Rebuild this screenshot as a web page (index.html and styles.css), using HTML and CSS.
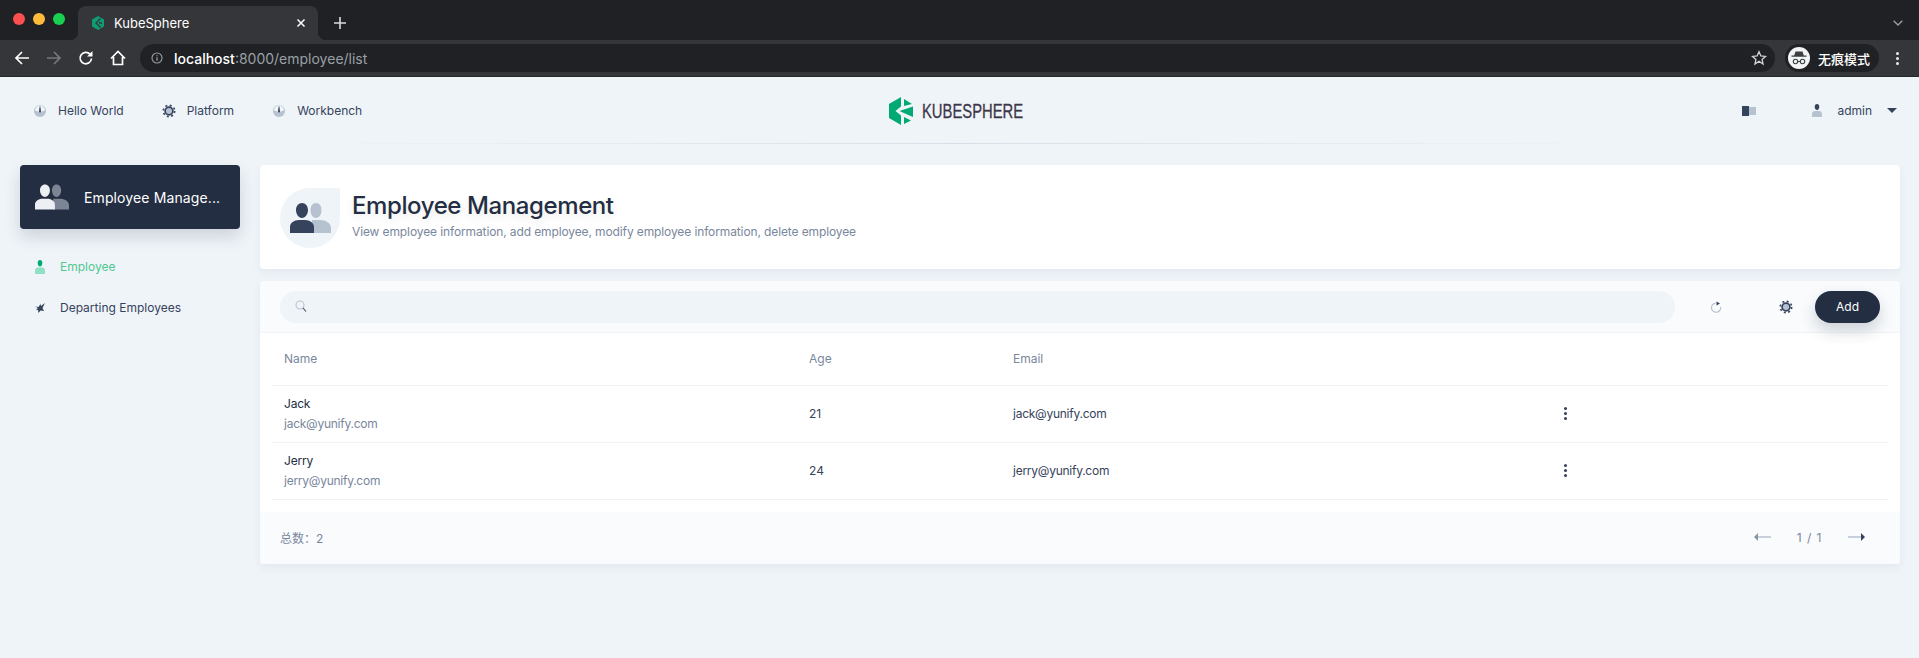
FILE: index.html
```html
<!DOCTYPE html>
<html lang="en">
<head>
<meta charset="utf-8">
<title>KubeSphere</title>
<link rel="stylesheet" href="styles.css">
</head>
<body>
<svg class="defs" width="0" height="0" aria-hidden="true">
  <symbol id="dial" viewBox="0 0 16 16">
    <circle cx="8" cy="8" r="6" fill="#b6c2cf"/>
    <path d="M3 7.500A5 5 0 0 1 13 7.500L8 9z" fill="#f2f5f8"/>
    <path d="M7.600 3.500h.8L9 8.500a1 1 0 1 1-2 0z" fill="#36435c"/>
  </symbol>
  <symbol id="gear" viewBox="0 0 16 16">
    <circle cx="8" cy="8" r="3.900" fill="#b6c2cf" stroke="#36435c" stroke-width="1.700"/>
    <circle cx="8" cy="8" r="5.700" fill="none" stroke="#36435c" stroke-width="1.600" stroke-dasharray="2 2.480"/>
  </symbol>
  <symbol id="group" viewBox="0 0 41 30">
    <path class="back" d="M26 0c3.500 0 5.500 3 5.500 7s-2 8-5.500 8-5.500-4-5.500-8 2-7 5.500-7zM22 17h8c6 0 11 3 11 8v5H22z"/>
    <path class="front" d="M12 0c3.500 0 6 3 6 7s-2.500 8-6 8-6-4-6-8 2.500-7 6-7zM0 30v-6c0-4 4-7 9-7h6c5 0 9 3 9 7v6z"/>
  </symbol>
</svg>

<header class="browser">
  <div class="tabstrip">
    <div class="lights">
      <span class="light red"></span><span class="light amber"></span><span class="light green"></span>
    </div>
    <div class="tab">
      <svg class="favicon" viewBox="0 0 14 14"><path d="M7 0l6 3.500v7L7 14l-6-3.500v-7z" fill="#0f9b73"/><path d="M9.500 2.500L5 7l4.500 4.500M8 7h3" stroke="#35363a" stroke-width="1.300" fill="none"/></svg>
      <span class="tab-title">KubeSphere</span>
      <svg class="tab-close" viewBox="0 0 10 10"><path d="M1.500 1.500l7 7M8.500 1.500l-7 7" stroke="#fff" stroke-width="1.500"/></svg>
    </div>
    <svg class="new-tab" viewBox="0 0 12 12"><path d="M6 0v12M0 6h12" stroke="#dadce0" stroke-width="1.600"/></svg>
    <svg class="tab-menu" viewBox="0 0 10 6"><path d="M.7.7L5 5l4.300-4.300" stroke="#9aa0a6" stroke-width="1.300" fill="none"/></svg>
  </div>
  <div class="toolbar">
    <svg class="tool" viewBox="0 0 16 16"><path d="M15 8H2M8 2L2 8l6 6" stroke="#fff" stroke-width="1.700" fill="none"/></svg>
    <svg class="tool" viewBox="0 0 16 16"><path d="M1 8h13M8 2l6 6-6 6" stroke="#75777b" stroke-width="1.700" fill="none"/></svg>
    <svg class="tool" viewBox="0 0 16 16"><path d="M13.500 8.500A5.700 5.700 0 1 1 12 4.200" stroke="#fff" stroke-width="1.700" fill="none"/><path d="M14.500 1v5.500H9z" fill="#fff"/></svg>
    <svg class="tool" viewBox="0 0 16 16"><path d="M1 8.500L8 1.500l7 7M3.500 7v7.500h9V7" stroke="#fff" stroke-width="1.700" fill="none"/></svg>
    <div class="omnibox">
      <svg class="info" viewBox="0 0 12 12"><circle cx="6" cy="6" r="5" stroke="#9aa0a6" stroke-width="1.100" fill="none"/><path d="M6 5.200v3.600M6 3.200v1.100" stroke="#9aa0a6" stroke-width="1.200"/></svg>
      <span class="url"><b>localhost</b>:8000/employee/list</span>
      <svg class="star" viewBox="0 0 16 16"><path d="M8 1.700l1.900 4.200 4.600.5-3.400 3.100.9 4.500L8 11.200l-4 2.800.9-4.500L1.500 6.400l4.600-.5z" stroke="#d2d4d7" stroke-width="1.300" fill="none"/></svg>
    </div>
    <div class="incognito">
      <svg class="spy" viewBox="0 0 22 22"><circle cx="11" cy="11" r="11" fill="#f1f3f4"/><path d="M7.500 4.500h7l1.300 4H18.500v1.300H3.500V8.500h2.700z" fill="#3c4043"/><circle cx="7.500" cy="14.500" r="2.200" fill="none" stroke="#3c4043" stroke-width="1.100"/><circle cx="14.500" cy="14.500" r="2.200" fill="none" stroke="#3c4043" stroke-width="1.100"/><path d="M9.700 14.500h2.600" stroke="#3c4043"/></svg>
      <span>无痕模式</span>
    </div>
    <div class="kebab"><i></i><i></i><i></i></div>
  </div>
</header>

<div class="page">
  <nav class="topnav">
    <div class="nav-left">
      <a class="nav-item"><svg class="icon16"><use href="#dial"/></svg>Hello World</a>
      <a class="nav-item"><svg class="icon16"><use href="#gear"/></svg>Platform</a>
      <a class="nav-item"><svg class="icon16"><use href="#dial"/></svg>Workbench</a>
    </div>
    <div class="logo">
      <svg class="logo-mark" viewBox="0 0 24 28"><path d="M12 0v9.500L6.500 14l5.500 4.500V28L0 21V7z" fill="#00aa72"/><path d="M15 2l8 5-8 2z" fill="#00aa72"/><path d="M10.500 14L24 9.500V20l-8-3.500z" fill="#00aa72"/><path d="M15 20l7 3.500-7 3.500z" fill="#00aa72"/></svg>
      <span class="logo-text">KUBESPHERE</span>
    </div>
    <div class="nav-right">
      <svg class="book" viewBox="0 0 14 10"><path d="M0 0h7v10H0z" fill="#36435c"/><path d="M7 1h7v8H7z" fill="#b6c2cf"/></svg>
      <svg class="user" viewBox="0 0 10 13"><path d="M5 0c1.500 0 2.300 1.200 2.300 2.800S6.500 6 5 6 2.700 4.400 2.700 2.800 3.500 0 5 0z" fill="#36435c"/><path d="M0 13v-3c0-2 1.500-3 3-3h4c1.500 0 3 1 3 3v3z" fill="#b6c2cf"/></svg>
      <span class="admin">admin</span>
      <span class="caret"></span>
    </div>
  </nav>

  <div class="layout">
    <aside class="sidebar">
      <div class="side-card">
        <svg class="side-group"><use href="#group"/></svg>
        <span class="side-title">Employee Manage...</span>
      </div>
      <ul class="side-menu">
        <li class="side-item active">
          <svg class="side-icon" viewBox="0 0 10 14"><path d="M5 0c1.500 0 2.300 1.200 2.300 3S6.500 6.500 5 6.500 2.700 4.800 2.700 3 3.500 0 5 0z" fill="#00aa72"/><path d="M0 14v-3.500C0 8.500 1.500 7.500 3 7.500h4c1.500 0 3 1 3 3V14z" fill="#90e0c5"/></svg>
          Employee
        </li>
        <li class="side-item">
          <svg class="side-icon" viewBox="0 0 10 10"><path d="M0 3.500l3.500 .5L5.500 1l.5 2L10 0 7.500 5 9 8 5.500 7.500 3.500 10 3 7 1 6.500 3 5z" fill="#36435c"/></svg>
          Departing Employees
        </li>
      </ul>
    </aside>

    <main class="content">
      <section class="banner">
        <div class="avatar"><svg class="avatar-icon"><use href="#group"/></svg></div>
        <div class="banner-text">
          <h1>Employee Management</h1>
          <p>View employee information, add employee, modify employee information, delete employee</p>
        </div>
      </section>

      <section class="panel">
        <div class="panel-tools">
          <div class="search">
            <svg class="search-icon" viewBox="0 0 12 13"><circle cx="5" cy="5" r="4" fill="none" stroke="#b6c2cf" stroke-width="1.100"/><path d="M8 8l3 3.500" stroke="#36435c" stroke-width="1.100"/></svg>
          </div>
          <svg class="refresh" viewBox="0 0 12 12"><path d="M8.800 3.200A4.600 4.600 0 1 1 2.500 3.600" fill="none" stroke="#b6c2cf" stroke-width="1.100" transform="rotate(40 6 7)"/><path d="M6.500 0.500v4l3.500-2z" fill="#36435c"/></svg>
          <svg class="gear-tool"><use href="#gear"/></svg>
          <button class="add" type="button">Add</button>
        </div>

        <div class="table">
          <div class="row head"><span>Name</span><span>Age</span><span>Email</span><span></span></div>
          <div class="row">
            <div><div class="name">Jack</div><div class="sub">jack@yunify.com</div></div>
            <span>21</span><span class="mail">jack@yunify.com</span>
            <span class="dots"><i></i><i></i><i></i></span>
          </div>
          <div class="row">
            <div><div class="name">Jerry</div><div class="sub">jerry@yunify.com</div></div>
            <span>24</span><span class="mail">jerry@yunify.com</span>
            <span class="dots"><i></i><i></i><i></i></span>
          </div>
        </div>

        <div class="panel-foot">
          <span class="total">总数：2</span>
          <div class="pager">
            <svg class="arrow" viewBox="0 0 17 8"><path d="M4 4h13" stroke="#b6c2cf" stroke-width="1.500"/><path d="M0 4l4-4v8z" fill="#8795a8"/></svg>
            <span class="page-num">1 / 1</span>
            <svg class="arrow" viewBox="0 0 17 8"><path d="M0 4h13" stroke="#b6c2cf" stroke-width="1.500"/><path d="M17 4l-4-4v8z" fill="#36435c"/></svg>
          </div>
        </div>
      </section>
    </main>
  </div>
</div>
</body>
</html>
```
FILE: styles.css
```css
* { box-sizing: border-box; }
html, body { margin: 0; height: 100%; }
body {
  height: 658px;
  overflow: hidden;
  background: #eff4f9;
  font-family: Inter, "Noto Sans CJK SC", sans-serif;
  font-size: 12px;
  color: #36435c;
}
.defs { position: absolute; }

/* Browser chrome */
.browser { background: #202124; height: 77px; border-bottom: 1px solid #26272a; }
.tabstrip { height: 40px; display: flex; align-items: flex-start; }
.lights { display: flex; gap: 8px; padding: 13px 0 0 13px; width: 78px; }
.light { width: 12px; height: 12px; border-radius: 50%; }
.red { background: #fc4f50; }
.amber { background: #fdbb39; }
.green { background: #18cf4f; }
.tab {
  position: relative;
  margin-top: 6px;
  width: 240px;
  height: 34px;
  background: #35363a;
  border-radius: 8px 8px 0 0;
  display: flex;
  align-items: center;
  padding: 0 12px 0 13px;
  color: #fff;
  font-size: 13px;
}
.tab::before, .tab::after {
  content: "";
  position: absolute;
  bottom: 0;
  width: 8px;
  height: 8px;
}
.tab::before { left: -8px; background: radial-gradient(circle at 0 0, transparent 8px, #35363a 8.5px); }
.tab::after { right: -8px; background: radial-gradient(circle at 100% 0, transparent 8px, #35363a 8.5px); }
.favicon { width: 14px; height: 14px; flex: none; }
.tab-title { margin-left: 9px; flex: 1; }
.tab-close { width: 10px; height: 10px; }
.new-tab { width: 12px; height: 12px; margin: 17px 0 0 16px; }
.tab-menu { width: 10px; height: 6px; margin: 20px 16px 0 auto; }
.toolbar { height: 36px; background: #35363a; display: flex; align-items: center; padding-left: 14px; }
.tool { width: 16px; height: 16px; margin-right: 16px; flex: none; }
.tool:nth-child(4) { margin-right: 14px; }
.omnibox {
  width: 1635px;
  height: 28px;
  border-radius: 14px;
  background: #202124;
  display: flex;
  align-items: center;
  padding: 0 8px 0 11px;
}
.info { width: 12px; height: 12px; flex: none; }
.url { margin-left: 11px; font-size: 14px; color: #9aa0a6; flex: 1; }
.url b { font-weight: 500; color: #fff; }
.star { width: 16px; height: 16px; }
.incognito {
  margin-left: 10px;
  width: 94px;
  height: 28px;
  border-radius: 14px;
  background: #202124;
  display: flex;
  align-items: center;
  gap: 8px;
  padding-left: 3px;
  color: #fff;
  font-size: 13px;
  font-weight: 500;
}
.spy { width: 22px; height: 22px; flex: none; }
.kebab { margin-left: 17px; display: flex; flex-direction: column; gap: 2px; }
.kebab i { width: 3px; height: 3px; border-radius: 50%; background: #e8eaed; }

/* Top nav */
.topnav {
  height: 67px;
  display: grid;
  grid-template-columns: 1fr auto 1fr;
  align-items: center;
  padding: 0 23px 0 32px;
  background: linear-gradient(90deg, #eff4f9 15%, #d8dfe8 50%, #eff4f9 85%) bottom / 100% 1px no-repeat;
}
.nav-left { display: flex; gap: 37px; }
.nav-item { display: flex; align-items: center; gap: 10px; color: #36435c; }
.icon16 { width: 16px; height: 16px; flex: none; }
.logo { display: flex; align-items: center; gap: 9px; margin-right: 15px; }
.logo-mark { width: 24px; height: 28px; }
.logo-text {
  display: block;
  width: 102px;
  white-space: nowrap;
  font-family: "Liberation Sans", sans-serif;
  font-size: 20px;
  line-height: 28px;
  color: #3e3648;
  -webkit-text-stroke: .3px #3e3648;
  transform: scaleX(.74);
  transform-origin: left center;
}
.nav-right { display: flex; align-items: center; justify-content: flex-end; }
.book { width: 14px; height: 10px; }
.user { width: 10px; height: 13px; margin-left: 56px; }
.admin { margin-left: 15px; }
.caret { margin: 0 -1px 0 15px; border: 5px solid transparent; border-top: 5px solid #36435c; border-bottom: 0; }

/* Layout */
.layout { display: flex; gap: 20px; padding: 21px 19px 0 20px; }
.sidebar { width: 220px; flex: none; }
.side-card {
  height: 64px;
  background: #242e42;
  border-radius: 4px;
  box-shadow: 0 8px 16px rgba(36, 46, 66, .16);
  display: flex;
  align-items: center;
  padding-left: 15px;
  color: #fff;
  font-size: 14px;
}
.side-title { letter-spacing: .12px; }
.side-group { width: 34px; height: 26px; margin-right: 15px; flex: none; --front: #eceff3; --back: #7c8594; }
.back { fill: var(--back); }
.front { fill: var(--front); }
.side-menu { list-style: none; margin: 0; padding: 17px 0 0 15px; }
.side-item { height: 41px; display: flex; align-items: center; gap: 15px; }
.side-item.active { color: #4fc890; }
.side-icon { width: 10px; height: 14px; flex: none; }

/* Content */
.content { flex: 1; min-width: 0; display: flex; flex-direction: column; gap: 12px; }
.banner {
  height: 104px;
  background: #fff;
  border-radius: 4px;
  box-shadow: 0 4px 8px rgba(36, 46, 66, .06);
  display: flex;
  align-items: center;
  padding: 0 20px;
  gap: 12px;
}
.avatar {
  width: 60px;
  height: 60px;
  margin-top: 2px;
  background: #eff4f9;
  border-radius: 50% 0 50% 50%;
  display: flex;
  align-items: center;
  justify-content: center;
  flex: none;
}
.avatar-icon { width: 41px; height: 30px; --front: #36435c; --back: #b6c2cf; }
.banner-text { margin-bottom: 2px; }
h1 {
  margin: 0;
  font-size: 24px;
  line-height: 32px;
  font-weight: 500;
  letter-spacing: -.4px;
  color: #242e42;
  text-shadow: 0 4px 8px rgba(36, 46, 66, .1);
}
.banner-text p { margin: 0; line-height: 20px; color: #79879c; letter-spacing: -.115px; }

.panel {
  background: #fff;
  border-radius: 4px;
  box-shadow: 0 4px 8px rgba(36, 46, 66, .06);
  overflow: hidden;
}
.panel-tools {
  height: 52px;
  background: #f9fbfd;
  border-bottom: 1px solid #eff4f9;
  display: flex;
  align-items: center;
  padding: 0 20px;
}
.search {
  width: 1395px;
  height: 32px;
  background: #eff4f9;
  border-radius: 16px;
  display: flex;
  align-items: center;
  padding-left: 15px;
}
.search-icon { width: 12px; height: 13px; }
.refresh { width: 12px; height: 12px; margin-left: 35px; }
.gear-tool { width: 16px; height: 16px; margin-left: 56px; }
.add {
  margin-left: 21px;
  width: 65px;
  height: 32px;
  border: 0;
  border-radius: 16px;
  background: #242e42;
  color: #fff;
  font: 400 12px Inter, sans-serif;
  box-shadow: 0 8px 16px rgba(36, 46, 66, .2);
}
.table { margin: 0 12px; height: 179px; }
.row {
  display: grid;
  grid-template-columns: 525px 204px 545px 1fr;
  align-items: center;
  padding: 0 0 2px 12px;
  height: 57px;
  border-bottom: 1px solid #eff4f9;
  color: #36435c;
}
.row.head { height: 53px; color: #79879c; }
.name { color: #242e42; line-height: 16px; margin-top: 2px; letter-spacing: -.2px; }
.sub { color: #79879c; line-height: 16px; margin-top: 4px; letter-spacing: -.25px; }
.mail { letter-spacing: -.25px; }
.dots { display: flex; flex-direction: column; align-items: center; gap: 2px; width: 14px; }
.dots i { width: 3px; height: 3px; border-radius: 50%; background: #36435c; }
.panel-foot {
  height: 52px;
  padding: 0 35px 2px 20px;
  background: #f9fbfd;
  display: flex;
  align-items: center;
  justify-content: space-between;
  color: #79879c;
}
.pager { display: flex; align-items: center; gap: 26px; }
.page-num { letter-spacing: .5px; word-spacing: 1px; }
.arrow { width: 17px; height: 8px; }
```
